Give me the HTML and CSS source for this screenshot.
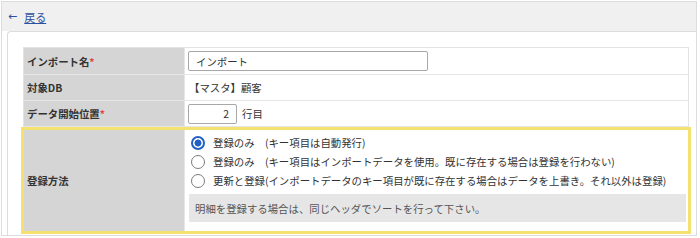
FILE: index.html
```html
<!DOCTYPE html>
<html lang="ja">
<head>
<meta charset="utf-8">
<link rel="stylesheet" href="styles.css">
</head>
<body>
<div class="page">
  <div class="topbar">
    <a class="back" href="#"><span class="arrow">←</span><span class="back-text">戻る</span></a>
  </div>
  <div class="panel">
    <div class="form">
      <div class="row row-1">
        <div class="label">インポート名<span class="req">*</span></div>
        <div class="value"><div class="input input-name">インポート</div></div>
      </div>
      <div class="row">
        <div class="label">対象DB</div>
        <div class="value"><span class="plain">【マスタ】顧客</span></div>
      </div>
      <div class="row">
        <div class="label">データ開始位置<span class="req">*</span></div>
        <div class="value"><div class="input input-num">2</div><span class="unit">行目</span></div>
      </div>
      <div class="row row-method">
        <div class="label">登録方法</div>
        <div class="value value-method">
          <div class="options">
            <div class="option"><span class="radio checked"></span><span>登録のみ　(キー項目は自動発行)</span></div>
            <div class="option"><span class="radio"></span><span>登録のみ　(キー項目はインポートデータを使用。既に存在する場合は登録を行わない)</span></div>
            <div class="option"><span class="radio"></span><span>更新と登録(インポートデータのキー項目が既に存在する場合はデータを上書き。それ以外は登録)</span></div>
          </div>
          <div class="note">明細を登録する場合は、同じヘッダでソートを行って下さい。</div>
        </div>
      </div>
    </div>
  </div>
</div>
</body>
</html>
```
FILE: styles.css
```css
* { box-sizing: border-box; }
html, body { margin: 0; padding: 0; background: #ffffff; }
body {
  font-family: "Noto Sans CJK JP", "Noto Sans", sans-serif;
  font-size: 10.4px;
  color: #333333;
}
.page {
  margin: 1px 0 0 1px;
  width: 696px;
  height: 235px;
  border: 1px solid #dcdcdc;
  overflow: hidden;
  background: #ffffff;
}
.topbar {
  height: 29px;
  background: #f0f0f0;
  display: flex;
  align-items: center;
  padding-left: 6px;
}
.back {
  display: flex;
  align-items: center;
  gap: 7px;
  color: #2c4f9e;
  text-decoration: none;
  font-size: 11px;
}
.arrow { font-family: "DejaVu Sans", sans-serif; font-size: 11px; }
.back-text { text-decoration: underline; }
.panel {
  margin-left: 5px;
  border-top: 1px solid #dcdcdc;
  border-left: 1px solid #dcdcdc;
  border-top-left-radius: 4px;
  padding: 15px 8px 0 15px;
  height: 205px;
}
.form {
  width: 666px;
  border: 1px solid #e3e3e3;
  border-bottom: none;
}
.row {
  display: grid;
  grid-template-columns: 161px 1fr;
  border-bottom: 1px solid #e6e6e6;
  height: 26px;
}
.row-1 { height: 27px; }
.label {
  background: #d5d5d5;
  font-weight: bold;
  display: flex;
  align-items: center;
  padding-left: 3px;
  border-right: 1px solid #e6e6e6;
}
.req { color: #e0453f; }
.value {
  display: flex;
  align-items: center;
  padding-left: 3px;
  gap: 5px;
}
.plain { padding-left: 1px; }
.input {
  height: 20px;
  border: 1px solid #a8a8a8;
  border-radius: 2px;
  display: flex;
  align-items: center;
  background: #ffffff;
}
.input-name { width: 240px; padding-left: 7px; }
.input-num { width: 49px; justify-content: flex-end; padding-right: 7px; }
.row-method {
  height: 101px;
  margin-top: 3px;
  outline: 3px solid #f5e16f;
  border-bottom: none;
}
.value-method {
  flex-direction: column;
  align-items: stretch;
  justify-content: flex-start;
  gap: 4px;
  padding: 3px 2px 0 4px;
}
.options { display: flex; flex-direction: column; }
.option {
  height: 19px;
  display: flex;
  align-items: center;
  gap: 8px;
  padding-left: 2px;
}
.radio {
  width: 14px;
  height: 14px;
  border-radius: 50%;
  border: 1px solid #7c7c7c;
  background: #ffffff;
  flex: none;
}
.radio.checked {
  border: 2px solid #2160c4;
  background: radial-gradient(circle, #2160c4 0 3.2px, #ffffff 3.8px);
}
.note {
  height: 28px;
  background: #e6e6e6;
  color: #555555;
  display: flex;
  align-items: center;
  padding-left: 6px;
}
```
